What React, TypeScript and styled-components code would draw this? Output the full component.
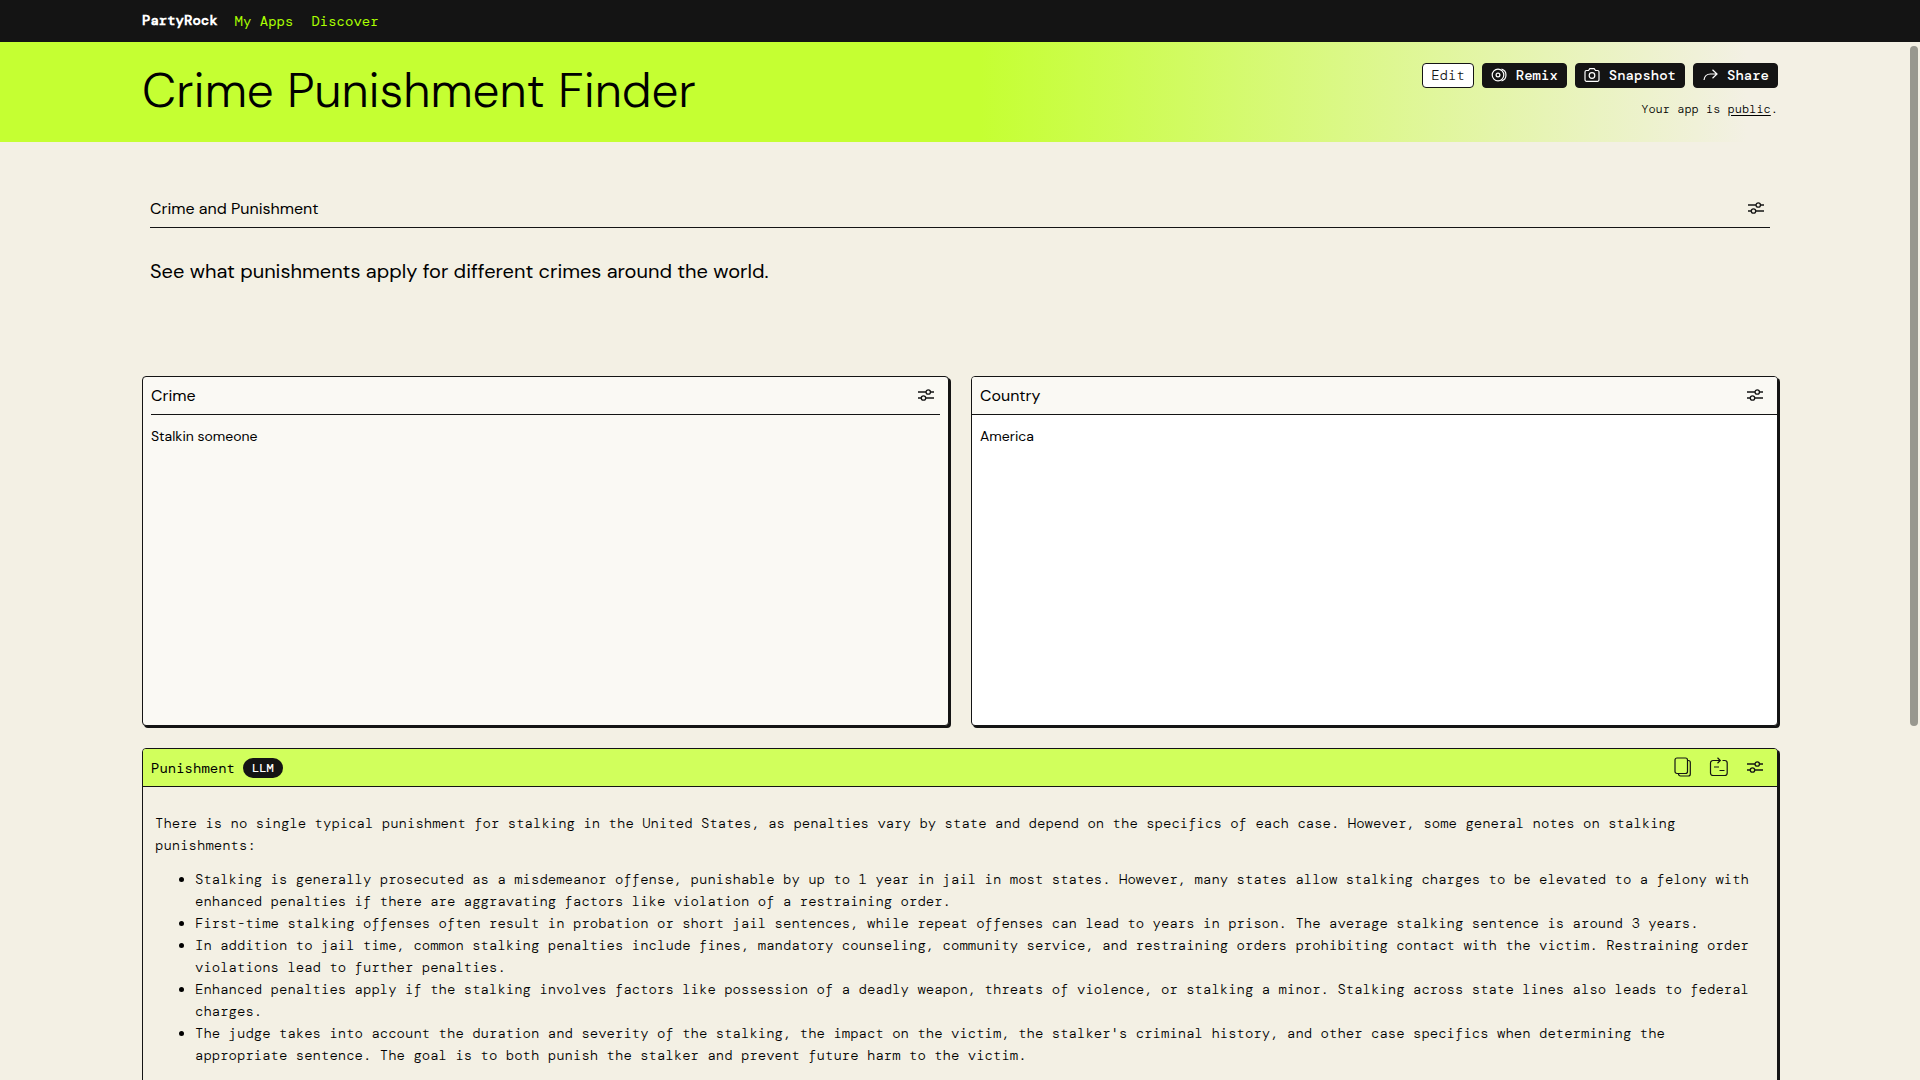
import React from "react";
import styled, { createGlobalStyle } from "styled-components";

const INK = "#141414";
const SAND = "#f3f0e4";
const SANS = `"DM Sans", Inter, "Liberation Sans", sans-serif`;
const MONO = `"DM Mono", "Liberation Mono", monospace`;

const GlobalStyle = createGlobalStyle`
  *, *::before, *::after { box-sizing: border-box; }
  html, body, #root { height: 100%; }
  body { margin: 0; background: ${SAND}; color: #000; font-family: ${SANS}; overflow: hidden; }
  h1, h2, p, ul { margin: 0; }
  button, textarea { font: inherit; color: inherit; }
`;

const Page = styled.div`
  height: 100vh;
  overflow: hidden;
`;

const Inner = styled.div`
  max-width: 1684px;
  margin: 0 auto;
  padding: 0 24px;
`;

const NavBar = styled.header`
  background: ${INK};
  font-family: ${MONO};
`;

const NavRow = styled(Inner)`
  display: flex;
  align-items: center;
  height: 42px;
`;

const Brand = styled.a`
  margin-right: 17px;
  padding-bottom: 2px;
  color: #fff;
  font-size: 14px;
  font-weight: 800;
  text-decoration: none;
`;

const NavLink = styled.a`
  margin-right: 18px;
  color: #aaff00;
  font-size: 14px;
  text-decoration: none;
`;

const Hero = styled.section`
  background: linear-gradient(90deg, #c5ff32 51%, ${SAND} 91%);
`;

const HeroRow = styled(Inner)`
  display: flex;
  justify-content: space-between;
  height: 100px;
`;

const Title = styled.h1`
  padding-top: 19px;
  font-size: 48px;
  font-weight: 300;
  line-height: 60px;
`;

const HeroSide = styled.div`
  display: flex;
  flex-direction: column;
  align-items: flex-end;
  padding-top: 21px;
`;

const Actions = styled.div`
  display: flex;
  gap: 8px;
`;

const ActionButton = styled.button<{ $light?: boolean }>`
  display: flex;
  align-items: center;
  gap: 8px;
  height: 25px;
  padding: 0 8px 1px;
  border: 1px solid ${INK};
  border-radius: 4px;
  background: ${(p) => (p.$light ? "#fff" : INK)};
  color: ${(p) => (p.$light ? INK : "#fff")};
  font-family: ${MONO};
  font-size: 14px;
  font-weight: ${(p) => (p.$light ? 300 : 500)};
`;

const Status = styled.p`
  margin-top: 12px;
  font-family: ${MONO};
  font-size: 12px;
  font-weight: 300;
  line-height: 18px;
  a { color: inherit; text-underline-offset: 2px; }
`;

const Board = styled(Inner)`
  display: grid;
  grid-template-columns: 1fr 1fr;
  gap: 22px;
  padding-top: 46px;
`;

const Intro = styled.section`
  grid-column: 1 / -1;
  height: 166px;
  padding: 0 8px;
`;

const CardHead = styled.div<{ $tone?: string; $ruled?: boolean }>`
  display: flex;
  align-items: center;
  gap: 8px;
  height: 38px;
  padding: ${(p) => (p.$ruled ? "0" : "0 8px")};
  margin: ${(p) => (p.$ruled ? "0 8px" : "0")};
  border-bottom: 1px solid ${INK};
  background: ${(p) => p.$tone || "transparent"};
`;

const IntroHead = styled(CardHead)`
  height: 40px;
  margin: 0;
  padding-top: 2px;
`;

const Heading = styled.h2<{ $mono?: boolean }>`
  font-family: ${(p) => (p.$mono ? MONO : SANS)};
  font-size: ${(p) => (p.$mono ? "14px" : "16px")};
  font-weight: 400;
  line-height: 24px;
`;

const Lead = styled.p`
  padding-top: 28px;
  font-size: 20px;
  line-height: 30px;
`;

const Tools = styled.div`
  display: flex;
  gap: 12px;
  margin-left: auto;
  padding: 0 2px 1px 0;
`;

const IconButton = styled.button`
  display: grid;
  place-items: center;
  width: 24px;
  height: 24px;
  margin: 0;
  padding: 0;
  border: 0;
  background: none;
`;

const Card = styled.section<{ $fill: string; $wide?: boolean }>`
  grid-column: ${(p) => (p.$wide ? "1 / -1" : "auto")};
  display: flex;
  flex-direction: column;
  min-height: 350px;
  border: 1px solid ${INK};
  border-radius: 4px;
  background: ${(p) => p.$fill};
  box-shadow: 2px 2px 0 ${INK};
  overflow: hidden;
`;

const Field = styled.textarea`
  flex: 1;
  width: 100%;
  padding: 10px 8px;
  border: 0;
  outline: 0;
  resize: none;
  background: transparent;
  font-family: ${SANS};
  font-size: 14px;
  line-height: 22px;
`;

const Badge = styled.span`
  padding: 0 9px;
  border-radius: 10px;
  background: ${INK};
  color: #fff;
  font-family: ${MONO};
  font-size: 12px;
  font-weight: 700;
  line-height: 20px;
`;

const Answer = styled.div`
  padding: 25px 12px;
  font-family: ${MONO};
  font-size: 14px;
  font-weight: 300;
  line-height: 22px;
  ul { padding-left: 40px; margin-top: 12px; }
`;

const ScrollThumb = styled.div`
  position: fixed;
  top: 46px;
  right: 2px;
  width: 8px;
  height: 63vh;
  border-radius: 4px;
  background: #98988f;
`;

const SettingsIcon = () => (
  <svg width="16" height="12" viewBox="0 0 16 12" fill="none" stroke={INK} strokeWidth="1.300">
    <path d="M0 3h8M12.500 3H16M0 9h3.500M8 9h8" />
    <circle cx="10.250" cy="3" r="2.200" />
    <circle cx="5.500" cy="9" r="2.200" />
  </svg>
);

const CopyIcon = () => (
  <svg width="18" height="20" viewBox="0 0 18 20" fill="none" stroke={INK} strokeWidth="1.200">
    <rect x="1" y="1" width="12.500" height="15.500" rx="2" />
    <path d="M13.500 3.500h.8a2 2 0 0 1 2 2V17a2 2 0 0 1-2 2H6.500a2 2 0 0 1-2-2v-.5" />
  </svg>
);

const ReuseIcon = () => (
  <svg width="20" height="20" viewBox="0 0 20 20" fill="none" stroke={INK} strokeWidth="1.200">
    <path d="M13.500 3.500h2.200a2.500 2.500 0 0 1 2.500 2.500v10a2.500 2.500 0 0 1-2.500 2.500H4A2.500 2.500 0 0 1 1.500 16V6A2.500 2.500 0 0 1 4 3.500h7M8.500 .8l2.800 2.700-2.800 2.700M5 10h5M10.500 13.500h5" />
  </svg>
);

const RemixIcon = () => (
  <svg width="17" height="14" viewBox="0 0 17 14" fill="none" stroke="#fff" strokeWidth="1.200">
    <circle cx="7" cy="7" r="5.800" />
    <circle cx="7" cy="7" r="1.900" />
    <path d="M10.500 1.200a6 6 0 0 1 0 11.600" />
  </svg>
);

const CameraIcon = () => (
  <svg width="17" height="14" viewBox="0 0 17 14" fill="none" stroke="#fff" strokeWidth="1.200">
    <path d="M2.500 2.500h2L5.800.7h4.400l1.300 1.800h2a1.500 1.500 0 0 1 1.500 1.500v7.800a1.500 1.500 0 0 1-1.500 1.500h-11A1.500 1.500 0 0 1 1 11.800V4a1.500 1.500 0 0 1 1.500-1.500Z" />
    <circle cx="8" cy="7.500" r="2.800" />
  </svg>
);

const ShareIcon = () => (
  <svg width="17" height="12" viewBox="-1 0 17 12" fill="none" stroke="#fff" strokeWidth="1.200">
    <path d="M1 11c.5-4 3-6 6.500-6H14M9.500 .8 14 5l-4.500 4.200" />
  </svg>
);

const Settings = () => (
  <IconButton aria-label="Settings"><SettingsIcon /></IconButton>
);

const NOTES = [
  "Stalking is generally prosecuted as a misdemeanor offense, punishable by up to 1 year in jail in most states. However, many states allow stalking charges to be elevated to a felony with enhanced penalties if there are aggravating factors like violation of a restraining order.",
  "First-time stalking offenses often result in probation or short jail sentences, while repeat offenses can lead to years in prison. The average stalking sentence is around 3 years.",
  "In addition to jail time, common stalking penalties include fines, mandatory counseling, community service, and restraining orders prohibiting contact with the victim. Restraining order violations lead to further penalties.",
  "Enhanced penalties apply if the stalking involves factors like possession of a deadly weapon, threats of violence, or stalking a minor. Stalking across state lines also leads to federal charges.",
  "The judge takes into account the duration and severity of the stalking, the impact on the victim, the stalker's criminal history, and other case specifics when determining the appropriate sentence. The goal is to both punish the stalker and prevent future harm to the victim.",
];

export default function App() {
  return (
    <Page>
      <GlobalStyle />
      <NavBar>
        <NavRow as="nav">
          <Brand href="#">PartyRock</Brand>
          <NavLink href="#apps">My Apps</NavLink>
          <NavLink href="#discover">Discover</NavLink>
        </NavRow>
      </NavBar>
      <Hero>
        <HeroRow>
          <Title>Crime Punishment Finder</Title>
          <HeroSide>
            <Actions>
              <ActionButton $light>Edit</ActionButton>
              <ActionButton><RemixIcon />Remix</ActionButton>
              <ActionButton><CameraIcon />Snapshot</ActionButton>
              <ActionButton><ShareIcon />Share</ActionButton>
            </Actions>
            <Status>Your app is <a href="#public">public</a>.</Status>
          </HeroSide>
        </HeroRow>
      </Hero>
      <Board as="main">
        <Intro>
          <IntroHead $ruled>
            <Heading>Crime and Punishment</Heading>
            <Tools><Settings /></Tools>
          </IntroHead>
          <Lead>See what punishments apply for different crimes around the world.</Lead>
        </Intro>
        <Card $fill="#faf9f4">
          <CardHead $ruled>
            <Heading as="label" htmlFor="crime">Crime</Heading>
            <Tools><Settings /></Tools>
          </CardHead>
          <Field id="crime" defaultValue="Stalkin someone" />
        </Card>
        <Card $fill="#fff">
          <CardHead $tone="#faf9f4">
            <Heading as="label" htmlFor="country">Country</Heading>
            <Tools><Settings /></Tools>
          </CardHead>
          <Field id="country" defaultValue="America" />
        </Card>
        <Card $fill={SAND} $wide>
          <CardHead $tone="#d1ff5c">
            <Heading $mono>Punishment</Heading>
            <Badge>LLM</Badge>
            <Tools>
              <IconButton aria-label="Copy"><CopyIcon /></IconButton>
              <IconButton aria-label="Retry"><ReuseIcon /></IconButton>
              <Settings />
            </Tools>
          </CardHead>
          <Answer>
            <p>
              There is no single typical punishment for stalking in the United States, as penalties vary by state and
              depend on the specifics of each case. However, some general notes on stalking punishments:
            </p>
            <ul>{NOTES.map((note) => <li key={note}>{note}</li>)}</ul>
          </Answer>
        </Card>
      </Board>
      <ScrollThumb />
    </Page>
  );
}
